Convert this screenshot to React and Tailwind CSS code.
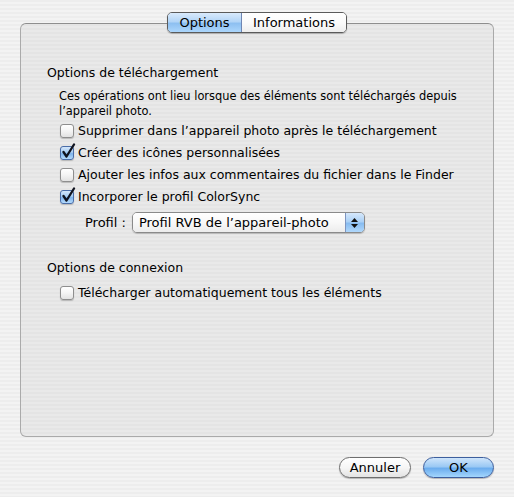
import React from "react";

function Checkbox({ checked }) {
  return (
    <div className="relative w-[14px] h-[14px] shrink-0">
      <div
        className={
          checked
            ? "w-[14px] h-[14px] rounded-[3px] border border-[#4a6da8] bg-[linear-gradient(to_bottom,#d4e6fa_0%,#a6cdf3_45%,#7fb4ec_55%,#b4dafc_100%)] shadow-[0_1px_1px_rgba(0,0,0,0.2)]"
            : "w-[14px] h-[14px] rounded-[3px] border border-[#8e8e8e] bg-[linear-gradient(to_bottom,#ffffff_0%,#f4f4f4_50%,#e2e2e2_100%)] shadow-[0_1px_1px_rgba(0,0,0,0.2)]"
        }
      />
      {checked && (
        <svg className="absolute left-[1px] top-[-3px]" width="15" height="16" viewBox="0 0 15 16">
          <path d="M2.5 9 L5.5 13.5 L13 1.5" fill="none" stroke="#10131f" strokeWidth="2.3" strokeLinecap="round" strokeLinejoin="round" />
        </svg>
      )}
    </div>
  );
}

function Row({ checked, children }) {
  return (
    <div className="h-[22px] flex items-center ml-[13px]">
      <Checkbox checked={checked} />
      <span className="ml-[4px] text-[12.5px] leading-[16px] text-black whitespace-nowrap">{children}</span>
    </div>
  );
}

export default function App() {
  return (
    <div
      className="w-[514px] h-[497px] overflow-hidden bg-[repeating-linear-gradient(to_bottom,#ededed_0px,#ededed_2px,#f3f3f3_2px,#f3f3f3_4px)] pt-[23px] pl-[20px]"
      style={{ fontFamily: '"DejaVu Sans", "Liberation Sans", sans-serif' }}
    >
      <div className="relative w-[474px] h-[414px] rounded-[6px] border border-[#aaaaaa] border-t-[#8e8e8e] bg-[repeating-linear-gradient(to_bottom,#e4e4e4_0px,#e4e4e4_2px,#e9e9e9_2px,#e9e9e9_4px)]">
        {/* tabs */}
        <div className="absolute left-1/2 -translate-x-1/2 top-[-12px] flex h-[21px] rounded-[5px] border border-[#5b5b5b] overflow-hidden shadow-[0_1px_1px_rgba(0,0,0,0.25)]">
          <div className="w-[74px] flex items-center justify-center text-[13px] leading-[16px] text-black border-r border-[#6f86b3] bg-[linear-gradient(to_bottom,#d9eafc_0%,#b3d5f7_45%,#8ec0f1_55%,#acd6fc_100%)]">
            Options
          </div>
          <div className="w-[104px] flex items-center justify-center text-[13px] leading-[16px] text-black bg-[linear-gradient(to_bottom,#ffffff_0%,#fbfbfb_50%,#eeeeee_100%)]">
            Informations
          </div>
        </div>

        <div className="flex flex-col pl-[26px] pt-[41px]">
          <div className="text-[12.5px] leading-[16px] text-black">Options de téléchargement</div>
          <div className="mt-[8px] ml-[12px] text-[11.4px] leading-[15px] text-black whitespace-nowrap">
            Ces opérations ont lieu lorsque des éléments sont téléchargés depuis
            <br />
            l’appareil photo.
          </div>
          <div className="mt-[1px] flex flex-col">
            <Row checked={false}>Supprimer dans l’appareil photo après le téléchargement</Row>
            <Row checked={true}>Créer des icônes personnalisées</Row>
            <Row checked={false}>Ajouter les infos aux commentaires du fichier dans le Finder</Row>
            <Row checked={true}>Incorporer le profil ColorSync</Row>
          </div>
          <div className="mt-[4px] flex items-center h-[21px]">
            <span className="ml-[38px] text-[13px] leading-[16px] text-black">Profil :</span>
            <div className="ml-[6px] w-[233px] h-[21px] flex rounded-[5px] border border-[#8a8a8a] overflow-hidden shadow-[0_1px_1px_rgba(0,0,0,0.2)]">
              <div className="flex-1 flex items-center pl-[6px] text-[13px] leading-[16px] text-black bg-[linear-gradient(to_bottom,#ffffff_0%,#f8f8f8_50%,#ececec_100%)]">
                Profil RVB de l’appareil-photo
              </div>
              <div className="w-[19px] flex flex-col items-center justify-center gap-[2px] border-l border-[#7e95c0] bg-[linear-gradient(to_bottom,#d6e8fb_0%,#acd1f6_45%,#88bcf0_55%,#b0d8fc_100%)]">
                <svg width="7" height="4" viewBox="0 0 7 4"><path d="M3.5 0 L7 4 L0 4 Z" fill="#111" /></svg>
                <svg width="7" height="4" viewBox="0 0 7 4"><path d="M0 0 L7 0 L3.5 4 Z" fill="#111" /></svg>
              </div>
            </div>
          </div>

          <div className="mt-[27px] text-[12.5px] leading-[16px] text-black">Options de connexion</div>
          <div className="mt-[6px]">
            <Row checked={false}>Télécharger automatiquement tous les éléments</Row>
          </div>
        </div>
      </div>

      <div className="mt-[20px] flex justify-end gap-[12px] pr-[20px]">
        <div className="w-[72px] h-[21px] rounded-full border border-[#6e6e6e] flex items-center justify-center text-[13px] leading-[16px] text-black bg-[linear-gradient(to_bottom,#ffffff_0%,#f6f6f6_50%,#e3e3e3_100%)] shadow-[0_1px_1px_rgba(0,0,0,0.25)]">
          Annuler
        </div>
        <div className="w-[71px] h-[21px] rounded-full border border-[#3d5f9e] flex items-center justify-center text-[13px] leading-[16px] text-black bg-[linear-gradient(to_bottom,#cfe5fb_0%,#9bc9f4_45%,#6cadee_55%,#a3d6fd_100%)] shadow-[0_1px_1px_rgba(0,0,0,0.25)]">
          OK
        </div>
      </div>
    </div>
  );
}
